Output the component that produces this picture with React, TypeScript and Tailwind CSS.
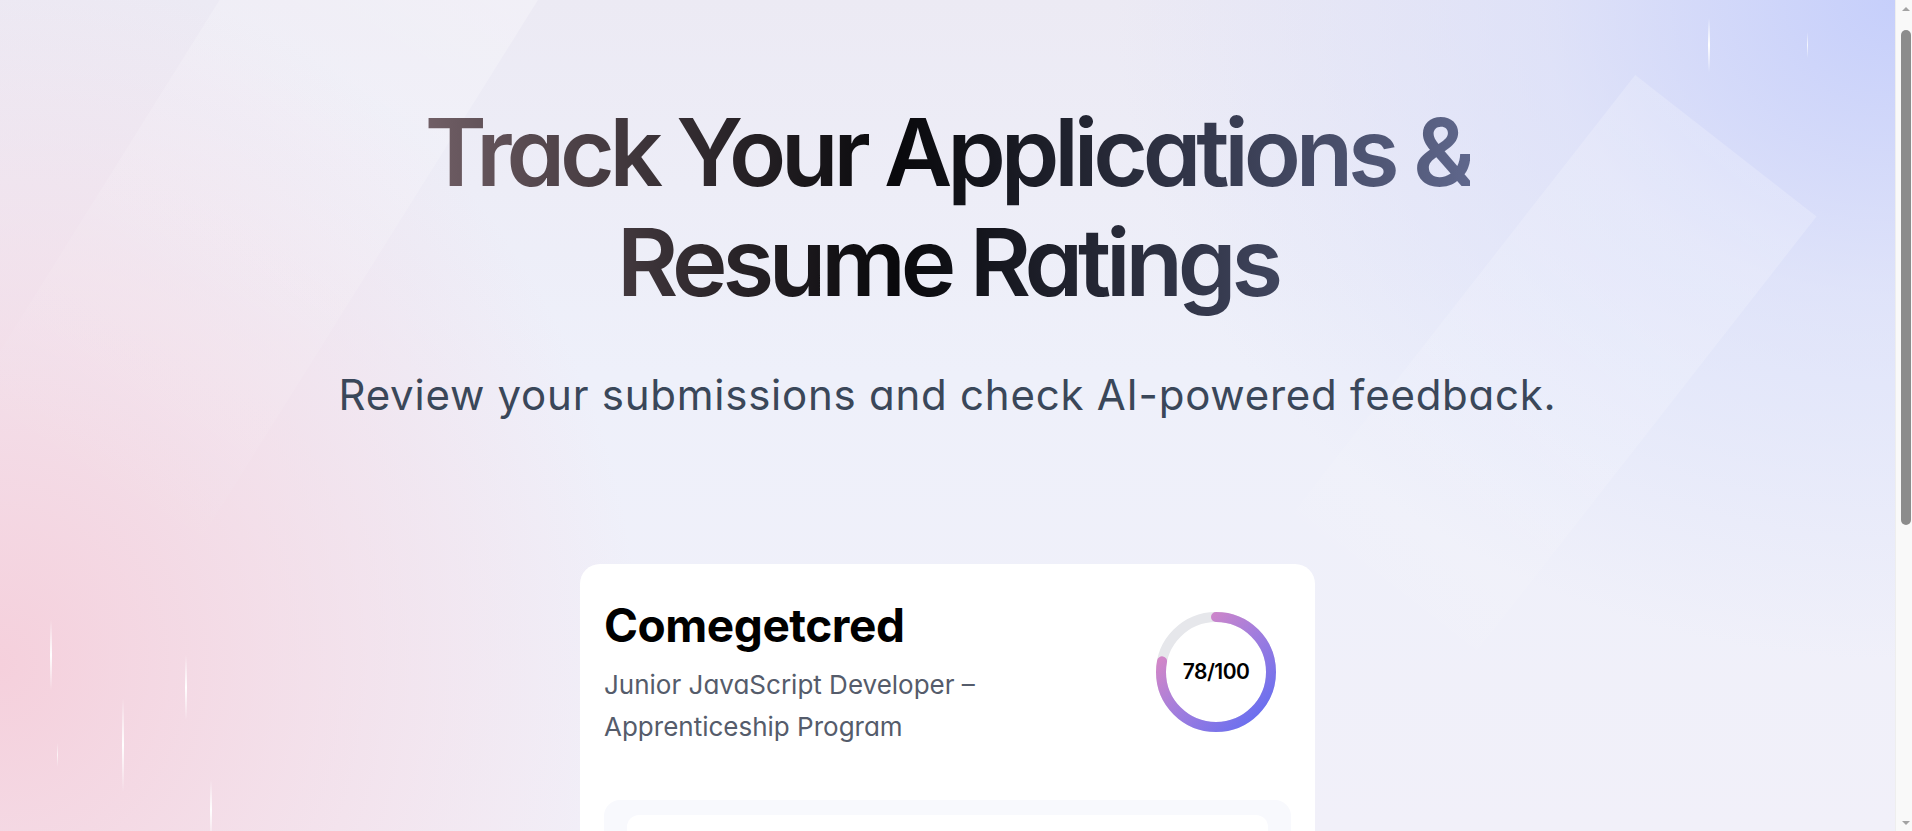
import React from 'react';

const tips = [
  { title: 'ATS Score', body: 'Your resume is well structured and easy to parse for applicant tracking systems.' },
  { title: 'Tone & Style', body: 'Clear, confident language. Consider trimming a few longer bullet points.' },
  { title: 'Content', body: 'Strong project section. Add measurable outcomes where you can.' },
  { title: 'Skills', body: 'Good match with the job keywords: JavaScript, React, Git, REST APIs.' },
];

function ScoreRing({ score }: { score: number }) {
  const r = 55;
  const c = 2 * Math.PI * r;
  return (
    <div className="relative w-[120px] h-[120px] shrink-0">
      <svg width="120" height="120" viewBox="0 0 120 120" className="-rotate-90">
        <defs>
          {/* svg is turned -90deg, so (1,0)->(0,1) reads top-left -> bottom-right on screen */}
          <linearGradient id="ring" x1="1" y1="0" x2="0" y2="1">
            <stop offset="0%" stopColor="#ee8cbb" />
            <stop offset="50%" stopColor="#a27ddd" />
            <stop offset="100%" stopColor="#5c6cf4" />
          </linearGradient>
        </defs>
        <circle cx="60" cy="60" r={r} fill="none" stroke="#e6e7eb" strokeWidth="10" />
        <circle
          cx="60"
          cy="60"
          r={r}
          fill="none"
          stroke="url(#ring)"
          strokeWidth="10"
          strokeLinecap="round"
          strokeDasharray={`${(score / 100) * c} ${c}`}
        />
      </svg>
      <div className="absolute inset-0 flex items-center justify-center text-[21px] font-semibold tracking-tight text-black">
        {score}/100
      </div>
    </div>
  );
}

function ScrollBar() {
  return (
    <aside className="flex w-[17px] shrink-0 flex-col border-l border-[#eeeeee] bg-[#f9f9f9] pl-[5px] pr-px">
      <div className="flex h-[17px] items-center justify-center">
        <div className="h-0 w-0 border-x-[4px] border-b-[4px] border-x-transparent border-b-[#a3a3a3]" />
      </div>
      <div className="mt-[13px] h-[495px] rounded-full bg-[#8c8c8c]" />
      <div className="flex-1" />
      <div className="flex h-[17px] items-center justify-center">
        <div className="h-0 w-0 border-x-[4px] border-t-[4px] border-x-transparent border-t-[#a3a3a3]" />
      </div>
    </aside>
  );
}

export default function App() {
  return (
    <div className="flex h-screen font-['Inter','Liberation_Sans',sans-serif] [font-feature-settings:'cv11']">
      <div className="relative flex-1 overflow-hidden bg-[#eff0fa] bg-[radial-gradient(ellipse_780px_660px_at_100%_0%,#c6cffb_0%,rgba(214,220,250,0.6)_45%,transparent_100%),radial-gradient(ellipse_640px_700px_at_0%_80%,#f5d0dc_0%,rgba(245,214,225,0.65)_45%,transparent_100%),linear-gradient(180deg,#eceaf4_0%,#eef0fa_45%,#f1f0f9_100%)]">
        {/* background decoration: glass bands and light streaks */}
        <div className="pointer-events-none absolute inset-0">
          <div className="absolute left-[150px] top-[-260px] h-[820px] w-[270px] rotate-[32deg] bg-gradient-to-b from-white/35 via-white/15 to-transparent" />
          <div className="absolute left-[1420px] top-[80px] h-[620px] w-[230px] rotate-[38deg] bg-gradient-to-b from-white/20 via-white/15 to-transparent" />
          <div className="absolute left-[50px] top-[620px] h-[70px] w-[2px] bg-gradient-to-b from-transparent via-white to-transparent" />
          <div className="absolute left-[57px] top-[743px] h-[24px] w-px bg-gradient-to-b from-transparent via-white/70 to-transparent" />
          <div className="absolute left-[122px] top-[698px] h-[94px] w-[2px] bg-gradient-to-b from-transparent via-white to-transparent" />
          <div className="absolute left-[185px] top-[655px] h-[65px] w-[2px] bg-gradient-to-b from-transparent via-white to-transparent" />
          <div className="absolute left-[210px] top-[780px] h-[60px] w-[2px] bg-gradient-to-b from-transparent via-white to-transparent" />
          <div className="absolute left-[1708px] top-[18px] h-[54px] w-[2px] bg-gradient-to-b from-transparent via-white to-transparent" />
          <div className="absolute left-[1807px] top-[32px] h-[26px] w-px bg-gradient-to-b from-transparent via-white/80 to-transparent" />
        </div>

        <div className="relative h-full overflow-y-auto [scrollbar-width:none]">
          <main className="flex flex-col items-center pt-[98px] pb-[94px]">
            <h1 className="w-fit text-center text-[94px] leading-[1.17] font-semibold tracking-[-0.055em] bg-linear-to-r from-[#715f66] via-[#09090c] via-45% to-[#5f678c] bg-clip-text text-transparent">
              Track Your Applications &amp;
              <br />
              Resume Ratings
            </h1>
            <p className="mt-[45px] text-[42px] leading-[1.5] tracking-[0.018em] text-[#3a4759]">
              Review your submissions and check AI-powered feedback.
            </p>

            <section className="mt-[138px] w-[735px] rounded-[20px] bg-white pb-6">
              <div className="flex items-start justify-between px-6 pt-[34px]">
                <div>
                  <h2 className="text-[46px] leading-[1.2] font-bold tracking-[-0.01em] text-black">Comegetcred</h2>
                  <p className="mt-[11px] max-w-[400px] text-[26px] leading-[42px] text-[#555c6b]">
                    Junior JavaScript Developer – Apprenticeship Program
                  </p>
                </div>
                <div className="mt-[14px] mr-[15px]">
                  <ScoreRing score={78} />
                </div>
              </div>

              <div className="mx-6 mt-[52px] rounded-2xl bg-[#f8f9fd] px-[23px] pt-[15px] pb-6">
                <div className="flex flex-col gap-5 rounded-xl bg-white p-6">
                  {tips.map((t) => (
                    <div key={t.title}>
                      <h3 className="text-xl font-semibold text-gray-900">{t.title}</h3>
                      <p className="mt-2 text-base text-gray-600">{t.body}</p>
                    </div>
                  ))}
                </div>
              </div>
            </section>
          </main>
        </div>
      </div>
      <ScrollBar />
    </div>
  );
}
